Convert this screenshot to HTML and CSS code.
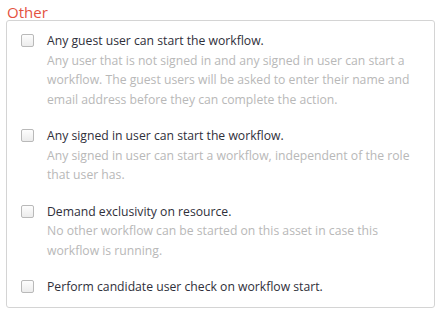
FILE: index.html
```html
<!DOCTYPE html>
<html lang="en">
<head>
    <meta charset="UTF-8">
    <meta name="viewport" content="width=device-width, initial-scale=1.0">
    <title>Workflow options</title>
    <link rel="stylesheet" href="styles.css">
</head>
<body>

<div class="options-group">
    <div class="group-title">Other</div>
    <div class="group-box">
        <label class="option">
            <input type="checkbox" class="option-check">
            <span class="option-text">
                <span class="option-label">Any guest user can start the workflow.</span>
                <span class="option-help">Any user that is not signed in and any signed in user can start a workflow. The guest users will be asked to enter their name and email address before they can complete the action.</span>
            </span>
        </label>
        <label class="option">
            <input type="checkbox" class="option-check">
            <span class="option-text">
                <span class="option-label">Any signed in user can start the workflow.</span>
                <span class="option-help">Any signed in user can start a workflow, independent of the role that user has.</span>
            </span>
        </label>
        <label class="option">
            <input type="checkbox" class="option-check">
            <span class="option-text">
                <span class="option-label">Demand exclusivity on resource.</span>
                <span class="option-help">No other workflow can be started on this asset in case this workflow is running.</span>
            </span>
        </label>
        <label class="option">
            <input type="checkbox" class="option-check">
            <span class="option-text">
                <span class="option-label">Perform candidate user check on workflow start.</span>
            </span>
        </label>
    </div>
</div>

</body>
</html>
```
FILE: styles.css
```css
body {
    margin: 0;
    background-color: #fff;
    font-family: "Open Sans", sans-serif;
    font-size: 12.2px;
}

.options-group {
    padding: 5px 8px 0 6px;
}

.group-title {
    color: #e4533f;
    font-size: 15px;
    line-height: 15px;
    padding-left: 1px;
}

.group-box {
    border: 1px solid #d4d4d4;
    border-radius: 3px;
    padding: 10px 14px 10px 14px;
    display: flex;
    flex-direction: column;
    gap: 17px;
}

.option {
    display: flex;
    align-items: flex-start;
    gap: 13px;
    line-height: 19.5px;
}

.option-check {
    appearance: none;
    margin: 3px 0 0 0;
    width: 13px;
    height: 13px;
    flex: none;
    border: 1px solid #b9b9b9;
    border-radius: 2px;
    background: linear-gradient(#fdfdfd, #ececec);
}

.option-text {
    display: flex;
    flex-direction: column;
    padding-right: 10px;
}

.option-label {
    color: #2f2f3a;
}

.option-help {
    color: #b8b8b8;
}
```
